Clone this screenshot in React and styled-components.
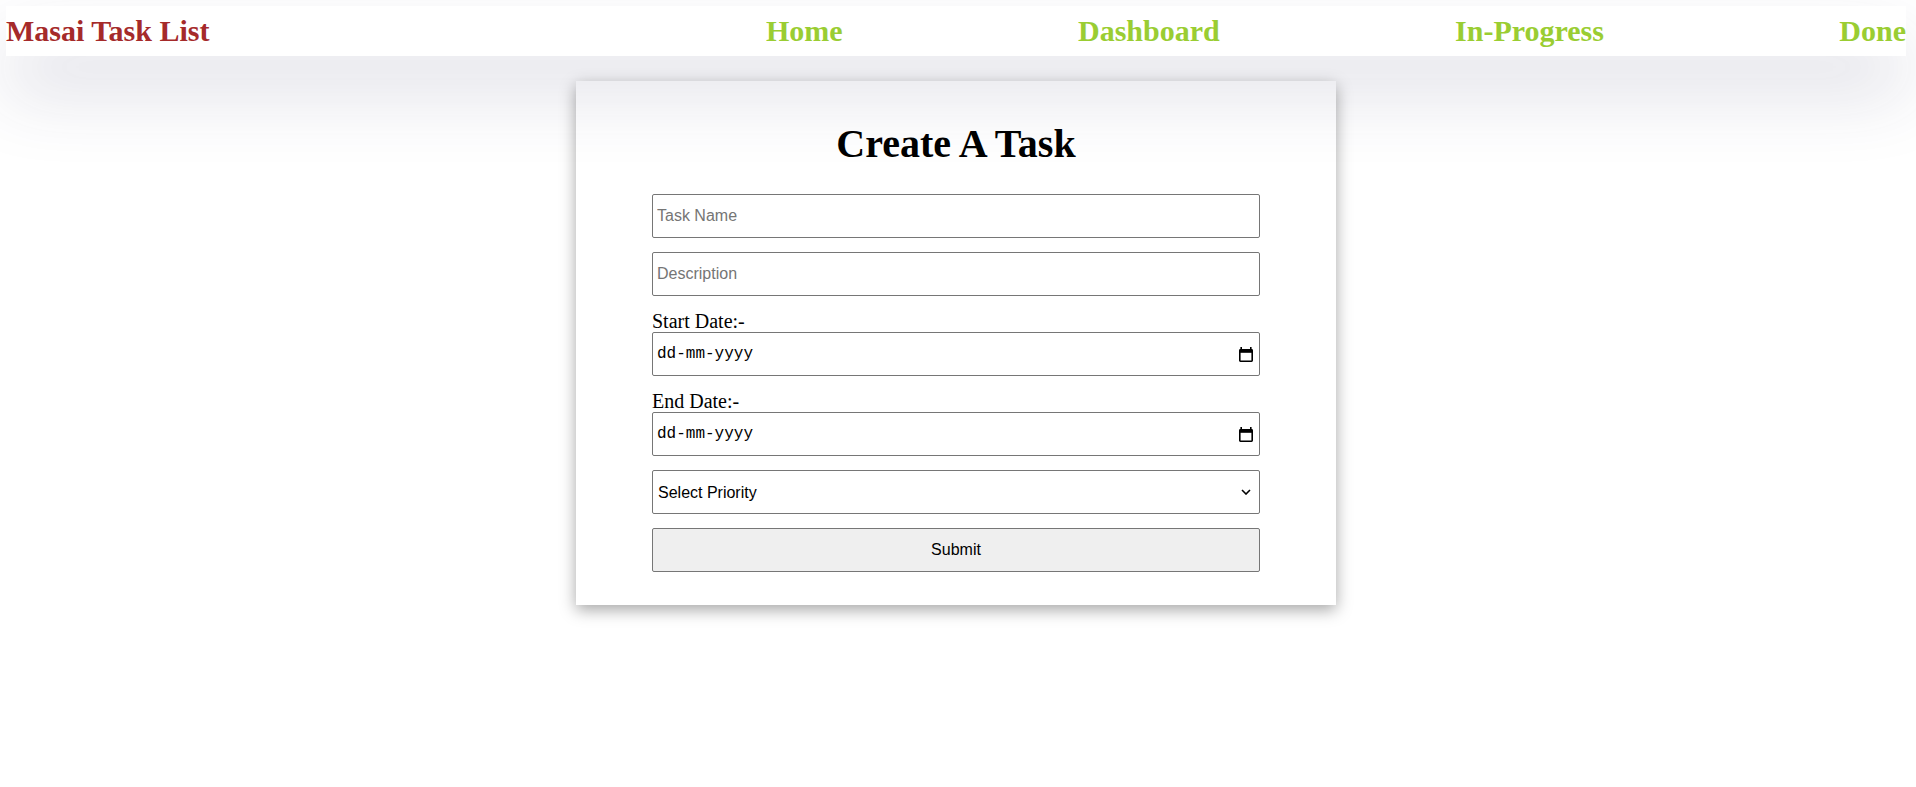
import React from "react";
import styled, { createGlobalStyle } from "styled-components";

const GlobalStyle = createGlobalStyle`
  body {
    margin: 0;
    background: #fff;
    font-family: "Liberation Serif", "Times New Roman", serif;
    color: #000;
  }
  * { box-sizing: border-box; }
`;

const Page = styled.div`
  min-height: 100vh;
  padding: 6px 10px 40px 6px;
`;

const Nav = styled.nav`
  height: 50px;
  display: flex;
  align-items: center;
  justify-content: space-between;
  background: #fff;
  box-shadow: rgba(50, 50, 93, 0.17) 0px 36px 72px;
`;

const Brand = styled.h2`
  margin: 0;
  font-size: 30px;
  font-weight: bold;
  color: #a52a2a;
`;

const Links = styled.div`
  width: 60%;
  display: flex;
  justify-content: space-between;
`;

const NavLink = styled.a`
  font-size: 30px;
  font-weight: bold;
  color: #9acd32;
  text-decoration: none;
`;

const Card = styled.div`
  width: 40%;
  margin: 25px auto 0;
  padding: 40px 0 33px;
  box-shadow: rgba(0, 0, 0, 0.35) 0px 5px 15px;
`;

const Title = styled.h1`
  margin: 0 0 28px;
  text-align: center;
  font-size: 40px;
  line-height: 45px;
`;

const Form = styled.form`
  width: 80%;
  margin: 0 auto;
  display: flex;
  flex-direction: column;
  gap: 14px;
`;

const Label = styled.label`
  display: block;
  font-size: 20px;
  line-height: 22px;
`;

const TextInput = styled.input`
  display: block;
  width: 100%;
  height: 44px;
  margin: 0;
  padding: 0 4px;
  border: 1px solid #767676;
  border-radius: 2px;
  background: #fff;
  font: 16px "Liberation Sans", Arial, sans-serif;
  outline: none;
  &::placeholder { color: #757575; }
`;

const DateBox = styled.div`
  display: flex;
  align-items: center;
  height: 44px;
  padding: 0 6px 0 4px;
  border: 1px solid #767676;
  border-radius: 2px;
  background: #fff;
`;

const DateText = styled.input`
  flex: 1;
  min-width: 0;
  padding: 0;
  border: none;
  outline: none;
  background: transparent;
  font: 16px "Liberation Mono", "DejaVu Sans Mono", monospace;
  &::placeholder { color: #000; }
`;

const SelectWrap = styled.div`
  position: relative;
`;

const Select = styled.select`
  display: block;
  width: 100%;
  height: 44px;
  padding: 0 24px 0 5px;
  border: 1px solid #767676;
  border-radius: 2px;
  background: #fff;
  color: #000;
  font: 16px "Liberation Sans", Arial, sans-serif;
  appearance: none;
  outline: none;
`;

const Chevron = styled.svg`
  position: absolute;
  right: 9px;
  top: 50%;
  transform: translateY(-50%);
  pointer-events: none;
`;

const SubmitButton = styled.button`
  height: 44px;
  width: 100%;
  border: 1px solid #767676;
  border-radius: 2px;
  background: #efefef;
  color: #000;
  font: 16px "Liberation Sans", Arial, sans-serif;
`;

const CalendarIcon = () => (
  <svg width="14" height="15" viewBox="0 0 14 15">
    <path d="M2.2 0v3M11.8 0v3" stroke="#000" strokeWidth="1.6" />
    <rect x="0.8" y="2.8" width="12.4" height="11.4" fill="none" stroke="#000" strokeWidth="1.6" rx="0.6" />
    <rect x="0.8" y="2.8" width="12.4" height="3" fill="#000" />
  </svg>
);

const DateField = ({ label }) => (
  <div>
    <Label>{label}</Label>
    <DateBox>
      <DateText type="text" placeholder="dd-mm-yyyy" />
      <CalendarIcon />
    </DateBox>
  </div>
);

const App = () => {
  return (
    <Page>
      <GlobalStyle />
      <Nav>
        <Brand>Masai Task List</Brand>
        <Links>
          <NavLink href="#">Home</NavLink>
          <NavLink href="#">Dashboard</NavLink>
          <NavLink href="#">In-Progress</NavLink>
          <NavLink href="#">Done</NavLink>
        </Links>
      </Nav>

      <Card>
        <Title>Create A Task</Title>
        <Form onSubmit={(e) => e.preventDefault()}>
          <TextInput type="text" placeholder="Task Name" />
          <TextInput type="text" placeholder="Description" />
          <DateField label="Start Date:-" />
          <DateField label="End Date:-" />
          <SelectWrap>
            <Select defaultValue="">
              <option value="">Select Priority</option>
              <option value="low">Low</option>
              <option value="medium">Medium</option>
              <option value="high">High</option>
            </Select>
            <Chevron width="10" height="6" viewBox="0 0 10 6">
              <path d="M1 1l4 4 4-4" fill="none" stroke="#000" strokeWidth="1.6" />
            </Chevron>
          </SelectWrap>
          <SubmitButton type="submit">Submit</SubmitButton>
        </Form>
      </Card>
    </Page>
  );
};

export default App;
